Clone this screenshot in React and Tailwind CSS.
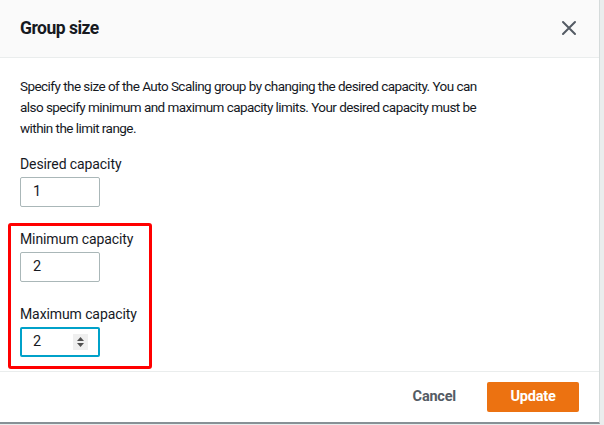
function Field({ label, value, focused }) {
  return (
    <div className="flex flex-col">
      <label className="text-[14px] leading-[22px] text-[#16191f] tracking-[-0.1px]">{label}</label>
      <div
        className={
          "mt-[2px] w-[80px] h-[30px] rounded-[2px] bg-white flex items-center justify-between " +
          (focused ? "border-2 border-[#00a1c9] pl-[11px] pr-[10px]" : "border border-[#aab7b8] pl-[12px] pr-[11px]")
        }
      >
        <span className="text-[14.5px] text-[#16191f]">{value}</span>
        {focused ? (
          <span className="w-[15px] h-[16px] bg-[#efefef] flex items-center justify-center">
            <svg width="9" height="12" viewBox="0 0 9 12">
              <path d="M4.5 1 L8 5 L1 5 Z" fill="#505050" />
              <path d="M4.5 11 L8 7 L1 7 Z" fill="#505050" />
            </svg>
          </span>
        ) : null}
      </div>
    </div>
  );
}

export default function App() {
  return (
    <div className="w-[604px] h-[425px] bg-[#eaeded] overflow-hidden font-['Roboto',sans-serif]">
      <div className="w-[600px] h-[424px] bg-white border-r border-r-[#d5dbdb] border-b-2 border-b-[#879196] flex flex-col">
        <div className="h-[58px] bg-[#fafafa] border-b border-[#eaeded] flex items-center justify-between pl-5 pr-[22px]">
          <h2 className="text-[17.5px] font-bold tracking-[-0.5px] text-[#16191f]">Group size</h2>
          <svg width="16" height="16" viewBox="0 0 16 16" className="mt-[-2px]">
            <path d="M2 2 L14 14 M14 2 L2 14" stroke="#545b64" strokeWidth="2" strokeLinecap="round" />
          </svg>
        </div>
        <div className="flex-1 px-5 pt-[18px]">
          <p className="text-[13.5px] leading-[21px] tracking-[-0.55px] text-[#16191f] w-[470px]">
            Specify the size of the Auto Scaling group by changing the desired capacity. You can also specify minimum and maximum capacity limits. Your desired capacity must be within the limit range.
          </p>
          <div className="mt-[14px]">
            <Field label="Desired capacity" value="1" />
          </div>
          <div className="mt-[16px] ml-[-12px] w-[144px] border-[3px] border-[#ff0000] rounded-[3px] pl-[9px] pt-[2px] pb-[9px]">
            <Field label="Minimum capacity" value="2" />
            <div className="mt-[21px]">
              <Field label="Maximum capacity" value="2" focused />
            </div>
          </div>
        </div>
        <div className="h-[51px] border-t border-[#eaeded] flex items-center justify-end gap-[10px] pr-5">
          <button className="h-[30px] px-[21px] text-[14.5px] font-bold tracking-[-0.2px] text-[#545b64]">Cancel</button>
          <button className="h-[30px] w-[92px] rounded-[2px] bg-[#ec7211] text-[14.5px] font-bold tracking-[-0.2px] text-white">Update</button>
        </div>
      </div>
    </div>
  );
}
